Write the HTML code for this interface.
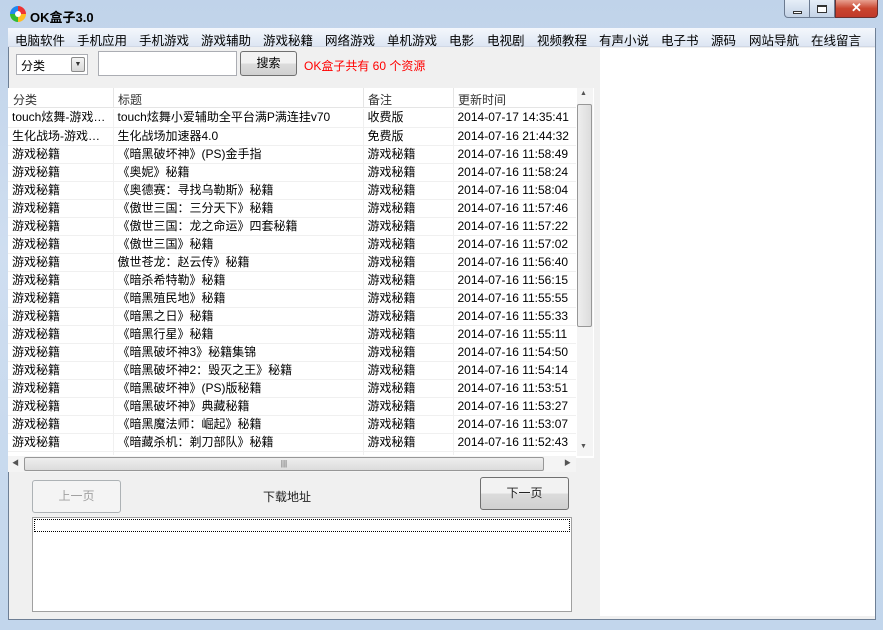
<!DOCTYPE html>
<html><head><meta charset="utf-8"><style>
*{margin:0;padding:0;box-sizing:border-box}
body{width:883px;height:630px;overflow:hidden;font-family:"Liberation Sans","Noto Sans CJK SC",sans-serif;font-size:12px;color:#000;position:relative;background:linear-gradient(#c0d3ea,#cfdef0 40%,#c2d6ec);}
.abs{position:absolute}
#client{left:8px;top:28px;width:868px;height:592px;background:#f0f0f0;border:1px solid #6e7f95;}
#menu{left:8px;top:28px;width:867px;height:19px;background:linear-gradient(#f4f7fc,#dde6f3);border-bottom:1px solid #d0d8e6}
#menu span{position:absolute;top:2px;font-size:12.5px;white-space:nowrap}
.title{left:30px;top:7px;font-weight:bold;font-size:13px}
.btn{border:1px solid #707070;border-radius:3px;background:linear-gradient(#f2f2f2 50%,#dcdcdc 50%,#d0d0d0);text-align:center}
table{border-collapse:collapse;table-layout:fixed}
td{height:18px;padding:0 4px;white-space:nowrap;overflow:hidden;text-overflow:ellipsis;border-right:1px solid #f0f0f0;border-bottom:1px solid #f0f0f0;font-size:12px;line-height:17px}
</style></head><body>
<div class="abs" style="left:10px;top:6px;width:16px;height:16px;border-radius:50%;background:conic-gradient(#e33 0 25%,#fb2 25% 50%,#3b3 50% 75%,#28e 75%)"><div style="position:absolute;left:5px;top:5px;width:6px;height:6px;background:#fff;border-radius:50%"></div></div>
<div class="abs title">OK盒子3.0</div>
<div class="abs" style="left:784px;top:0;width:26px;height:18px;border:1px solid #6b7a90;border-top:none;border-radius:0 0 0 4px;background:linear-gradient(#e6eef8,#c4d3e6)"><div style="position:absolute;left:8px;top:11px;width:9px;height:3px;border:1px solid #333;background:#fff"></div></div>
<div class="abs" style="left:810px;top:0;width:25px;height:18px;border:1px solid #6b7a90;border-top:none;border-left:none;background:linear-gradient(#e6eef8,#c4d3e6)"><div style="position:absolute;left:7px;top:5px;width:10px;height:8px;border:1px solid #333;border-top-width:2px;background:#fff"></div></div>
<div class="abs" style="left:835px;top:0;width:43px;height:18px;border:1px solid #6b3030;border-top:none;border-radius:0 0 4px 0;background:linear-gradient(#e8a090,#c9452f 50%,#c0392b);color:#fff;font-weight:bold;text-align:center;font-size:13px;line-height:15px">✕</div>
<div class="abs" id="client"></div>
<div class="abs" id="menu">
<span style="left:7px">电脑软件</span><span style="left:69px">手机应用</span><span style="left:131px">手机游戏</span><span style="left:193px">游戏辅助</span><span style="left:255px">游戏秘籍</span><span style="left:317px">网络游戏</span><span style="left:379px">单机游戏</span><span style="left:441px">电影</span><span style="left:479px">电视剧</span><span style="left:529px">视频教程</span><span style="left:591px">有声小说</span><span style="left:653px">电子书</span><span style="left:703px">源码</span><span style="left:741px">网站导航</span><span style="left:803px">在线留言</span>
</div>
<div class="abs" style="left:600px;top:48px;width:275px;height:568px;background:#fff"></div>
<div class="abs" style="left:16px;top:54px;width:72px;height:21px;background:#fff;border:1px solid #abadb3;padding:2px 0 0 4px">分类<div style="position:absolute;right:2px;top:2px;width:14px;height:15px;border:1px solid #8a8a8a;border-radius:2px;background:linear-gradient(#f4f4f4,#d8d8d8);font-size:7px;text-align:center;line-height:14px;color:#333">▼</div></div>
<div class="abs" style="left:98px;top:51px;width:139px;height:25px;background:#fff;border:1px solid #abadb3"></div>
<div class="abs btn" style="left:240px;top:51px;width:57px;height:25px;line-height:23px">搜索</div>
<div class="abs" style="left:304px;top:57px;color:#f00">OK盒子共有 60 个资源</div>
<div class="abs" style="left:8px;top:88px;width:586px;height:370px;background:#fff"></div>
<div class="abs" style="left:8px;top:88px;width:568px;height:20px;background:#fff;border-bottom:1px solid #e5e5e5;color:#333">
<span class="abs" style="left:5px;top:3px">分类</span><span class="abs" style="left:110px;top:3px">标题</span><span class="abs" style="left:360px;top:3px">备注</span><span class="abs" style="left:450px;top:3px">更新时间</span>
<div class="abs" style="left:105px;top:0;width:1px;height:20px;background:#e5e5e5"></div><div class="abs" style="left:355px;top:0;width:1px;height:20px;background:#e5e5e5"></div><div class="abs" style="left:445px;top:0;width:1px;height:20px;background:#e5e5e5"></div>
</div>
<div class="abs" style="left:8px;top:109px;width:568px;height:346px;overflow:hidden">
<table style="width:568px"><colgroup><col style="width:105px"><col style="width:250px"><col style="width:90px"><col style="width:123px"></colgroup>
<tr><td>touch炫舞-游戏辅助</td><td>touch炫舞小爱辅助全平台满P满连挂v70</td><td>收费版</td><td>2014-07-17 14:35:41</td></tr>
<tr><td>生化战场-游戏辅助</td><td>生化战场加速器4.0</td><td>免费版</td><td>2014-07-16 21:44:32</td></tr>
<tr><td>游戏秘籍</td><td>《暗黑破坏神》(PS)金手指</td><td>游戏秘籍</td><td>2014-07-16 11:58:49</td></tr>
<tr><td>游戏秘籍</td><td>《奥妮》秘籍</td><td>游戏秘籍</td><td>2014-07-16 11:58:24</td></tr>
<tr><td>游戏秘籍</td><td>《奥德赛：寻找乌勒斯》秘籍</td><td>游戏秘籍</td><td>2014-07-16 11:58:04</td></tr>
<tr><td>游戏秘籍</td><td>《傲世三国：三分天下》秘籍</td><td>游戏秘籍</td><td>2014-07-16 11:57:46</td></tr>
<tr><td>游戏秘籍</td><td>《傲世三国：龙之命运》四套秘籍</td><td>游戏秘籍</td><td>2014-07-16 11:57:22</td></tr>
<tr><td>游戏秘籍</td><td>《傲世三国》秘籍</td><td>游戏秘籍</td><td>2014-07-16 11:57:02</td></tr>
<tr><td>游戏秘籍</td><td>傲世苍龙：赵云传》秘籍</td><td>游戏秘籍</td><td>2014-07-16 11:56:40</td></tr>
<tr><td>游戏秘籍</td><td>《暗杀希特勒》秘籍</td><td>游戏秘籍</td><td>2014-07-16 11:56:15</td></tr>
<tr><td>游戏秘籍</td><td>《暗黑殖民地》秘籍</td><td>游戏秘籍</td><td>2014-07-16 11:55:55</td></tr>
<tr><td>游戏秘籍</td><td>《暗黑之日》秘籍</td><td>游戏秘籍</td><td>2014-07-16 11:55:33</td></tr>
<tr><td>游戏秘籍</td><td>《暗黑行星》秘籍</td><td>游戏秘籍</td><td>2014-07-16 11:55:11</td></tr>
<tr><td>游戏秘籍</td><td>《暗黑破坏神3》秘籍集锦</td><td>游戏秘籍</td><td>2014-07-16 11:54:50</td></tr>
<tr><td>游戏秘籍</td><td>《暗黑破坏神2：毁灭之王》秘籍</td><td>游戏秘籍</td><td>2014-07-16 11:54:14</td></tr>
<tr><td>游戏秘籍</td><td>《暗黑破坏神》(PS)版秘籍</td><td>游戏秘籍</td><td>2014-07-16 11:53:51</td></tr>
<tr><td>游戏秘籍</td><td>《暗黑破坏神》典藏秘籍</td><td>游戏秘籍</td><td>2014-07-16 11:53:27</td></tr>
<tr><td>游戏秘籍</td><td>《暗黑魔法师：崛起》秘籍</td><td>游戏秘籍</td><td>2014-07-16 11:53:07</td></tr>
<tr><td>游戏秘籍</td><td>《暗藏杀机：剃刀部队》秘籍</td><td>游戏秘籍</td><td>2014-07-16 11:52:43</td></tr>
<tr><td>&nbsp;</td><td></td><td></td><td></td></tr>
</table></div>
<div class="abs" style="left:577px;top:88px;width:16px;height:368px;background:#f4f4f4"></div>
<div class="abs" style="left:580px;top:90px;font-size:7px;color:#555">▲</div>
<div class="abs" style="left:580px;top:443px;font-size:7px;color:#555">▼</div>
<div class="abs" style="left:577px;top:104px;width:15px;height:223px;border:1px solid #979797;border-radius:2px;background:linear-gradient(90deg,#eee,#dcdcdc)"></div>
<div class="abs" style="left:8px;top:456px;width:568px;height:16px;background:#f4f4f4"></div>
<div class="abs" style="left:12px;top:458px;font-size:7px;color:#555">◀</div>
<div class="abs" style="left:564px;top:458px;font-size:7px;color:#555">▶</div>
<div class="abs" style="left:24px;top:457px;width:520px;height:14px;border:1px solid #979797;border-radius:2px;background:linear-gradient(#eee,#dcdcdc);text-align:center;font-size:8px;line-height:12px;color:#555">|||</div>
<div class="abs" style="left:32px;top:480px;width:89px;height:33px;border:1px solid #adb2b5;border-radius:3px;background:#f4f4f4;color:#a0a0a0;text-align:center;line-height:31px">上一页</div>
<div class="abs" style="left:263px;top:488px;color:#222">下载地址</div>
<div class="abs btn" style="left:480px;top:477px;width:89px;height:33px;line-height:31px;color:#222">下一页</div>
<div class="abs" style="left:32px;top:517px;width:540px;height:95px;background:#fff;border:1px solid #a0a0a0"><div style="margin:1px;height:13px;border:1px dotted #000"></div></div>
</body></html>
